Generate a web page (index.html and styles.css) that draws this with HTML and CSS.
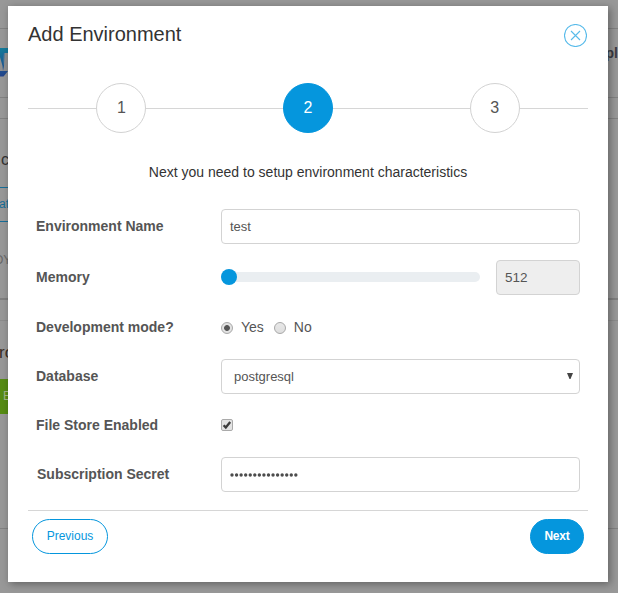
FILE: index.html
```
<!DOCTYPE html>
<html lang="en">
<head>
<meta charset="utf-8">
<title>Add Environment</title>
<link rel="stylesheet" href="styles.css">
</head>
<body>
<div class="page">
  <div class="bar top"></div>
  <div class="bar brand">
    <svg class="logo" width="8" height="29" viewBox="0 0 8 29"><defs><linearGradient id="g" x2="0" y2="1"><stop offset="0" stop-color="#147c9b"/><stop offset="1" stop-color="#24448c"/></linearGradient></defs><path d="M0 0H8V23L3.5 28.5H0Z" fill="url(#g)"/><path d="M0 9L2.5 18L3 23H0Z" fill="#929292"/><path d="M3 5H8V23H3L4 18Z" fill="#929292"/><path d="M3 5L4 18L4.5 5Z" fill="#2069a0"/></svg>
    <b class="edge">pl</b>
  </div>
  <div class="bar crumbs"></div>
  <div class="bar panel">
    <span class="cut heading">c</span>
    <span class="cut tab">at</span>
    <span class="cut muted">OY</span>
  </div>
  <div class="bar gap"></div>
  <div class="bar section">
    <span class="cut title">ro</span>
    <span class="cut green">E</span>
  </div>
</div>
<main class="modal">
  <header class="head">
    <h1>Add Environment</h1>
    <svg class="close" width="23" height="23" viewBox="0 0 23 23" fill="none" stroke="#58bbea"><circle cx="11.5" cy="11.5" r="11" stroke-width="1.1"/><path d="M7 7L16 16M16 7L7 16" stroke-width="1.1"/></svg>
  </header>
  <div class="steps">
    <div class="step"><span class="dot">1</span></div>
    <div class="step"><span class="dot active">2</span></div>
    <div class="step"><span class="dot">3</span></div>
  </div>
  <p class="intro">Next you need to setup environment characteristics</p>
  <form class="form">
    <label class="name">Environment Name</label>
    <div class="field">test</div>
    <label class="name">Memory</label>
    <div class="memory"><div class="track"><div class="thumb"></div></div><div class="field readonly">512</div></div>
    <label class="name">Development mode?</label>
    <div class="radios"><input type="radio" name="dev" checked><span class="yes">Yes</span><input type="radio" name="dev"><span class="no">No</span></div>
    <label class="name">Database</label>
    <div class="field select"><span>postgresql</span><svg width="6" height="6" viewBox="0 0 6 6"><path d="M0 0H6L3.5 6H2.5Z" fill="#444"/></svg></div>
    <label class="name">File Store Enabled</label>
    <div class="check"><svg width="12" height="12" viewBox="0 0 12 12"><rect x=".5" y=".5" width="11" height="11" rx="1.5" fill="#e3e3e3" stroke="#aaa"/><path d="M2.6 6.2L4.8 8.5L9.2 3" fill="none" stroke="#3c3c3c" stroke-width="2.3"/></svg></div>
    <label class="name secret">Subscription Secret</label>
    <div class="field"><svg class="password" width="69" height="4" viewBox="0 0 69 4"><path d="M2 2H67" fill="none" stroke="#4c4c4c" stroke-width="3.4" stroke-linecap="round" stroke-dasharray="0 4.56"/></svg></div>
  </form>
  <footer class="foot">
    <button class="btn">Previous</button>
    <button class="btn primary">Next</button>
  </footer>
</main>
</body>
</html>
```

FILE: styles.css
```
* { box-sizing: border-box; }
body {
  margin: 0;
  height: 593px;
  overflow: hidden;
  display: grid;
  background: #989898;
  font-family: "Liberation Sans", Arial, sans-serif;
  color: #555;
}
.page, .modal { grid-area: 1 / 1; }
.page { height: 593px; overflow: hidden; }
.bar { border-bottom: 1px solid #828282; }
.top { height: 29px; }
.brand { height: 69px; display: flex; justify-content: space-between; padding-top: 19px; }
.edge { font-size: 14px; line-height: 15px; margin-top: -2px; color: #3a3a42; }
.crumbs { height: 21px; }
.panel { height: 181px; border-bottom: 2px solid #808080; padding-top: 31px; }
.cut { display: block; white-space: nowrap; }
.heading { font-size: 16px; line-height: 20px; color: #333; height: 37px; padding-left: 1px; }
.tab { width: 20px; height: 35px; border: solid #176e98; border-width: 1px 0; color: #176e98; font-size: 12px; line-height: 33px; text-indent: -1px; }
.muted { margin-top: 30px; font-size: 12px; line-height: 16px; color: #686868; text-indent: -6px; }
.gap { height: 21px; border-color: #8c8c8c; }
.section { height: 208px; padding-top: 20px; }
.title { font-size: 17px; line-height: 24px; height: 38px; color: #3a2d25; text-indent: -1px; }
.green { height: 35px; width: 20px; background: #568c13; color: #a4b78a; font-size: 12px; line-height: 35px; padding-left: 3px; }
.modal {
  width: 600px;
  height: 576px;
  margin: 6px 0 0 8px;
  padding: 0 20px;
  background: #fff;
  box-shadow: 2px 2px 8px rgba(0, 0, 0, .36);
}
.head { height: 77px; padding-top: 16px; display: flex; justify-content: space-between; align-items: flex-start; }
h1 { margin: 0; font-size: 20px; line-height: 24px; font-weight: 400; color: #333; }
.close { margin: 2px 1px 0 0; }
.steps {
  display: grid;
  grid-template-columns: repeat(3, 1fr);
  height: 50px;
  background: linear-gradient(#d6d6d6, #d6d6d6) 0 25px / 100% 1px no-repeat;
}
.step { display: flex; justify-content: center; }
.dot { width: 50px; height: 50px; border: 1px solid #d2d2d2; border-radius: 50%; background: #fff; font-size: 16px; line-height: 47px; text-align: center; }
.active { background: #0596dd; border-color: #0596dd; color: #fff; }
.intro { margin: 31px 0 0; font-size: 14px; line-height: 16px; text-align: center; color: #333; }
.form {
  margin-top: 29px;
  padding: 0 8px;
  height: 301px;
  display: grid;
  grid-template-columns: 185px 359px;
  grid-template-rows: 35px 39px 34px 35px 35px 35px;
  row-gap: 14px;
  align-content: start;
  align-items: center;
}
.name { padding-bottom: 2px; font-size: 14px; line-height: 16px; font-weight: 700; color: #555; }
.secret { padding-left: 1px; }
.field { height: 35px; border: 1px solid #d3d3d3; border-radius: 4px; padding: 0 8px; font-size: 13px; line-height: 33px; display: flex; align-items: center; }
.memory { display: flex; align-items: center; gap: 16px; }
.track { width: 259px; height: 10px; border-radius: 5px; background: #eaeef1; display: flex; align-items: center; margin-bottom: 1px; }
.thumb { width: 16px; height: 16px; border-radius: 50%; background: #0596dd; }
.readonly { width: 84px; background: #eee; font-size: 13.5px; }
.radios { display: flex; align-items: center; font-size: 14px; line-height: 16px; padding-bottom: 2px; }
.radios input { appearance: none; width: 12px; height: 12px; margin: 2px 0 0; border: 1px solid #a8a8a8; border-radius: 50%; background: linear-gradient(#e8e8e8, #dedede); }
.radios input:checked { background: radial-gradient(circle, #555 0 2.5px, #e2e2e2 3.3px); }
.yes { margin: 0 10px 0 8px; }
.no { margin-left: 8px; }
.select { padding: 0 6px 0 12px; justify-content: space-between; }
.select svg { margin-top: -2px; }
.check { display: flex; padding-bottom: 1px; }
.foot { border-top: 1px solid #d6d6d6; padding: 8px 4px 0; display: flex; justify-content: space-between; }
.btn { width: 76px; height: 35px; padding: 0 0 2px; border: 1px solid #0596dd; border-radius: 18px; background: #fff; color: #0596dd; font: 12px "Liberation Sans", Arial, sans-serif; }
.primary { width: 54px; background: #0596dd; color: #fff; font-weight: 700; letter-spacing: -.2px; }
```
